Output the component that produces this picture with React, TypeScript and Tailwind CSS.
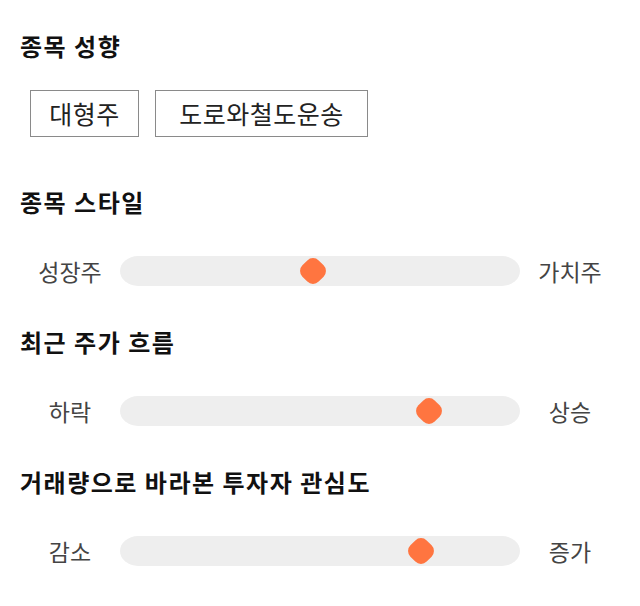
import React from 'react';

const sliders = [
  { title: '종목 스타일', left: '성장주', right: '가치주', value: 48.3 },
  { title: '최근 주가 흐름', left: '하락', right: '상승', value: 77.3 },
  { title: '거래량으로 바라본 투자자 관심도', left: '감소', right: '증가', value: 75.3 },
];

const RangeRow = ({ left, right, value }: { left: string; right: string; value: number }) => (
  <div className="flex items-center h-[30px]">
    <span className="w-[100px] text-center text-[23px] text-[#444444]">{left}</span>
    <div className="relative flex-1 h-[30px] rounded-[18px/15px] bg-[#eeeeee]">
      <div
        className="absolute top-1/2 w-[23px] h-[23px] -translate-x-1/2 -translate-y-1/2 rotate-45 rounded-[8px] bg-[#ff7540]"
        style={{ left: `${value}%` }}
      />
    </div>
    <span className="w-[100px] text-center text-[23px] text-[#444444]">{right}</span>
  </div>
);

export default function App() {
  return (
    <div className="w-[640px] min-h-[606px] bg-white px-5 pt-[31px] font-['Noto_Sans_CJK_KR','Noto_Sans',sans-serif]">
      <h2 className="h-[30px] leading-[30px] text-[24px] tracking-[1.5px] font-bold text-[#111111]">종목 성향</h2>
      <div className="mt-[29px] flex gap-4 pl-[10px]">
        <span className="w-[109px] h-[47px] flex items-center justify-center border border-[#8a8a8a] text-[25px] tracking-[0.5px] text-[#222222]">대형주</span>
        <span className="w-[213px] h-[47px] flex items-center justify-center border border-[#8a8a8a] text-[25px] tracking-[0.5px] text-[#222222]">도로와철도운송</span>
      </div>
      {sliders.map((s, i) => (
        <div key={s.title}>
          <h2 className={`h-[30px] leading-[30px] text-[24px] tracking-[1.5px] font-bold text-[#111111] ${i === 0 ? 'mt-[50px]' : 'mt-[41px]'}`}>
            {s.title}
          </h2>
          <div className="mt-[39px] -mx-5 px-5">
            <RangeRow left={s.left} right={s.right} value={s.value} />
          </div>
        </div>
      ))}
    </div>
  );
}
